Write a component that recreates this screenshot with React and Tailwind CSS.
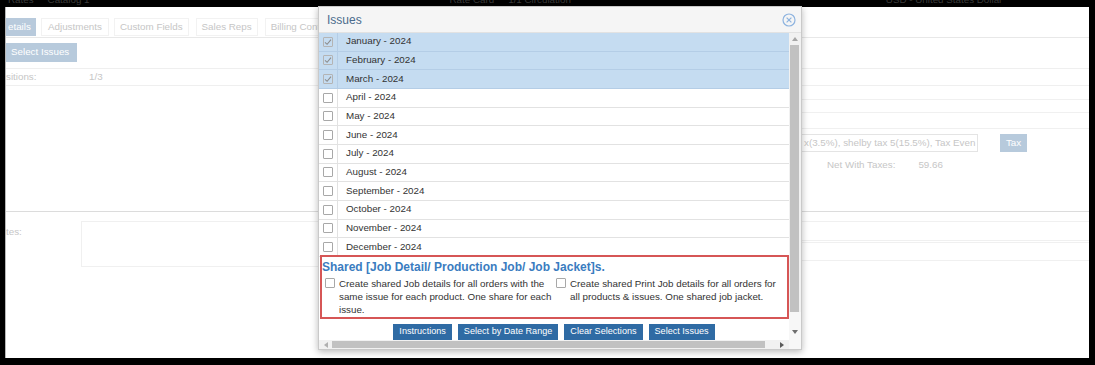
import React from "react";

const months = [
  "January", "February", "March", "April", "May", "June",
  "July", "August", "September", "October", "November", "December",
];

function Box({ checked, dim }) {
  return (
    <div
      className={
        "w-[10px] h-[10px] border rounded-[1px] flex items-center justify-center shrink-0 " +
        (dim ? "border-[#b4b4b4] bg-transparent" : "border-[#a8a8a8] bg-white")
      }
    >
      {checked && (
        <svg width="8" height="8" viewBox="0 0 8 8">
          <path d="M1 4.3 L3.1 6.3 L7 1.6" stroke="#8c8c8c" strokeWidth="1.1" fill="none" />
        </svg>
      )}
    </div>
  );
}

function Btn({ children }) {
  return (
    <div className="h-[16px] px-[6px] bg-[#2f6ba4] text-white text-[9.1px] flex items-center whitespace-nowrap">
      {children}
    </div>
  );
}

function Tri({ dir, color }) {
  const pts = {
    up: "0,4 3,0 6,4",
    down: "0,0 6,0 3,4",
    left: "4,0 4,6 0,3",
    right: "0,0 0,6 4,3",
  }[dir];
  const w = dir === "up" || dir === "down" ? 6 : 4;
  const h = dir === "up" || dir === "down" ? 4 : 6;
  return (
    <svg width={w} height={h} viewBox={`0 0 ${w} ${h}`}>
      <polygon points={pts} fill={color} />
    </svg>
  );
}

export default function App() {
  return (
    <div className="w-[1095px] h-[365px] bg-black relative overflow-hidden font-['Liberation_Sans',Arial,sans-serif]">
      {/* top black band with clipped text */}
      <div className="h-[7px] overflow-hidden flex text-[9.8px] text-[#3a3a3a] leading-[10px]">
        <span className="ml-[8px] -mt-[5px]">Rates</span>
        <span className="ml-[14px] -mt-[5px]">Catalog 1</span>
        <span className="ml-[360px] -mt-[5px]">Rate Card</span>
        <span className="ml-[14px] -mt-[5px]">1/1 Circulation</span>
        <span className="ml-[315px] -mt-[5px]">USD - United States Dollar</span>
      </div>

      {/* faded background page */}
      <div className="ml-[5px] w-[1084px] h-[351px] bg-white border-l border-[#b8b8b8] overflow-hidden flex flex-col text-[9.8px] text-[#c6c6c6]">
        <div className="h-[11px] shrink-0" />
        <div className="h-[20px] shrink-0 flex items-start border-b border-[#e8e8e8]">
          <div className="h-[18px] w-[30px] bg-[#b8cadc] text-white flex items-center pl-[2px]">etails</div>
          <div className="h-[18px] ml-[5px] px-[6px] border border-[#f2f2f2] flex items-center">Adjustments</div>
          <div className="h-[18px] ml-[5px] px-[5px] border border-[#f2f2f2] flex items-center">Custom Fields</div>
          <div className="h-[18px] ml-[7px] px-[5px] border border-[#f2f2f2] flex items-center">Sales Reps</div>
          <div className="h-[18px] ml-[7px] px-[5px] border border-[#f2f2f2] flex items-center whitespace-nowrap">Billing Contacts</div>
        </div>
        <div className="mt-[5px] h-[19px] w-[71px] shrink-0 bg-[#b7cadc] text-white pl-[5px] flex items-center">
          Select Issues
        </div>
        <div className="mt-[6px] h-[18px] shrink-0 border-y border-[#efefef] flex items-center">
          <span className="w-[83px]">sitions:</span>
          <span>1/3</span>
        </div>
        <div className="flex h-[125px] shrink-0">
          <div className="w-[790px] shrink-0" />
          <div className="flex-1 flex flex-col">
            <div className="h-[14px] border-b border-[#f0f0f0]" />
            <div className="h-[13px] border-b border-[#f0f0f0]" />
            <div className="h-[16px] border-b border-[#f0f0f0]" />
            <div className="mt-[5px] flex items-center h-[18px]">
              <div className="w-[182px] h-[18px] border border-[#e4e4e4] pl-[7px] flex items-center whitespace-nowrap overflow-hidden">
                x(3.5%), shelby tax 5(15.5%), Tax Even
              </div>
              <div className="ml-[22px] w-[27px] h-[18px] bg-[#b7cadc] text-white flex items-center justify-center">
                Tax
              </div>
            </div>
            <div className="mt-[6px] flex">
              <span className="ml-[31px]">Net With Taxes:</span>
              <span className="ml-[23px]">59.66</span>
            </div>
          </div>
        </div>
        <div className="border-t border-[#dcdcdc] shrink-0" />
        <div className="mt-[9px] flex shrink-0">
          <span className="w-[75px] pt-[4px]">tes:</span>
          <div className="w-[715px] h-[46px] border border-[#f0f0f0]" />
          <div className="flex-1 flex flex-col">
            <div className="h-[20px] border-t border-b border-[#f0f0f0]" />
            <div className="h-[19px] mt-[1px] border-t border-b border-[#f0f0f0]" />
          </div>
        </div>
      </div>

      {/* Issues modal */}
      <div className="absolute left-[318px] top-[6px] w-[484px] h-[344px] bg-white border border-[#c9c9c9] shadow-[0_2px_7px_rgba(0,0,0,0.28)] flex flex-col">
        <div className="h-[26px] shrink-0 bg-[#f5f5f5] border-b border-[#e2e2e2] flex items-center justify-between pl-[8px] pr-[5px]">
          <span className="text-[12px] text-[#4a6b8c]">Issues</span>
          <svg width="14" height="14" viewBox="0 0 14 14">
            <circle cx="7" cy="7" r="6" stroke="#8db3df" strokeWidth="1.2" fill="none" />
            <path d="M4.6 4.6 L9.4 9.4 M9.4 4.6 L4.6 9.4" stroke="#8db3df" strokeWidth="1.2" />
          </svg>
        </div>
        <div className="flex-1 min-h-0 grid grid-cols-[1fr_12px] grid-rows-[1fr_9px]">
          {/* content */}
          <div className="overflow-hidden flex flex-col text-[9.8px] text-[#333]">
            {months.map((m, i) => {
              const sel = i < 3;
              return (
                <div
                  key={m}
                  className={
                    "h-[18.67px] shrink-0 flex border-b " +
                    (sel ? "bg-[#c5dcf1] border-[#b4cde6]" : "bg-white border-[#e2e2e2]")
                  }
                >
                  <div
                    className={
                      "w-[19px] shrink-0 flex items-center justify-center border-r " +
                      (sel ? "border-[#b4cde6]" : "border-[#e2e2e2]")
                    }
                  >
                    <Box checked={sel} dim={sel} />
                  </div>
                  <div className="pl-[8px] flex items-center whitespace-nowrap">{m} - 2024</div>
                </div>
              );
            })}
            <div className="-mt-[2px] ml-[1px] shrink-0 border-2 border-[#d65656] bg-white relative">
              <div className="pt-[2px] leading-[16px] text-[12px] font-bold text-[#3a7cc0] whitespace-nowrap">
                Shared [Job Detail/ Production Job/ Job Jacket]s.
              </div>
              <div className="mt-[2px] pb-[1px] flex text-[9.8px] leading-[13px] text-[#333]">
                <div className="w-[233px] shrink-0 flex items-start pl-[3px] gap-[4px]">
                  <div className="mt-[1.5px]"><Box /></div>
                  <div className="w-[216px]">
                    Create shared Job details for all orders with the same issue for each product. One share for each issue.
                  </div>
                </div>
                <div className="flex items-start pl-[1px] gap-[4px]">
                  <div className="mt-[1.5px]"><Box /></div>
                  <div className="w-[212px]">
                    Create shared Print Job details for all orders for all products &amp; issues. One shared job jacket.
                  </div>
                </div>
              </div>
            </div>
            <div className="mt-[5px] shrink-0 flex justify-center gap-[6px]">
              <Btn>Instructions</Btn>
              <Btn>Select by Date Range</Btn>
              <Btn>Clear Selections</Btn>
              <Btn>Select Issues</Btn>
            </div>
          </div>

          {/* vertical scrollbar */}
          <div className="bg-[#f1f1f1] flex flex-col">
            <div className="h-[12px] shrink-0 flex items-center justify-center">
              <Tri dir="up" color="#a6a6a6" />
            </div>
            <div className="h-[267px] shrink-0 mx-[1px] mr-[2px] bg-[#c1c1c1]" />
            <div className="flex-1 bg-[#f7f7f7]" />
            <div className="h-[17px] shrink-0 bg-[#f7f7f7] flex items-center justify-center">
              <Tri dir="down" color="#6e6e6e" />
            </div>
          </div>

          {/* horizontal scrollbar */}
          <div className="bg-[#f1f1f1] flex items-center">
            <div className="w-[13px] shrink-0 flex items-center justify-center">
              <Tri dir="left" color="#b0b0b0" />
            </div>
            <div className="w-[433px] h-[7px] shrink-0 bg-[#c1c1c1]" />
            <div className="flex-1" />
            <div className="w-[14px] shrink-0 flex items-center justify-center">
              <Tri dir="right" color="#5a5a5a" />
            </div>
          </div>
          <div className="bg-[#f7f7f7]" />
        </div>
      </div>
    </div>
  );
}
